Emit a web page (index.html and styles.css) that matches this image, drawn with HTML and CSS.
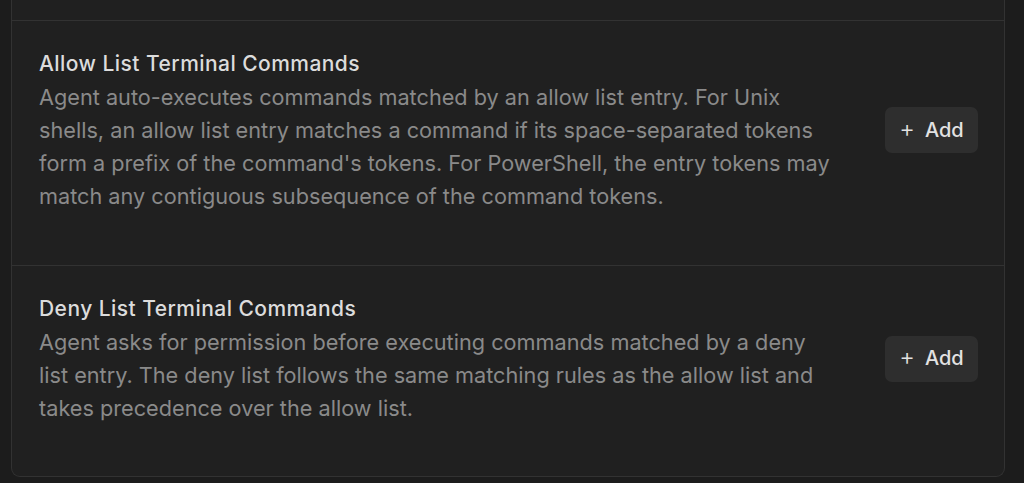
FILE: index.html
```html
<!DOCTYPE html>
<html lang="en">
<head>
<meta charset="utf-8">
<link rel="stylesheet" href="styles.css">
</head>
<body>
<div class="page">
  <div class="card">
    <div class="section section-prev"></div>
    <div class="section">
      <div class="row">
        <div class="text">
          <div class="title">Allow List Terminal Commands</div>
          <div class="desc">Agent auto-executes commands matched by an allow list entry. For Unix<br>shells, an allow list entry matches a command if its space-separated tokens<br>form a prefix of the command's tokens. For PowerShell, the entry tokens may<br>match any contiguous subsequence of the command tokens.</div>
        </div>
        <button class="add-btn"><span class="plus">+</span><span>Add</span></button>
      </div>
    </div>
    <div class="section">
      <div class="row">
        <div class="text">
          <div class="title">Deny List Terminal Commands</div>
          <div class="desc">Agent asks for permission before executing commands matched by a deny<br>list entry. The deny list follows the same matching rules as the allow list and<br>takes precedence over the allow list.</div>
        </div>
        <button class="add-btn"><span class="plus">+</span><span>Add</span></button>
      </div>
    </div>
  </div>
</div>
</body>
</html>
```
FILE: styles.css
```css
* { box-sizing: border-box; }
html, body {
  margin: 0;
  padding: 0;
  background: #1c1c1c;
  font-family: Inter, "Noto Sans", sans-serif;
  overflow: hidden;
}
.page {
  padding: 0 19px 6px 11px;
}
.card {
  background: #202020;
  border: 1px solid #323232;
  border-top: none;
  border-radius: 0 0 9px 9px;
}
.section {
  border-top: 1px solid #323232;
  padding: 26px 26px 52px 27px;
}
.section:last-child {
  padding-bottom: 51px;
}
.section-prev {
  border-top: none;
  height: 20px;
  padding: 0;
}
.row {
  display: flex;
  align-items: center;
  gap: 40px;
}
.text {
  flex: 1;
  min-width: 0;
}
.title {
  font-size: 21px;
  font-weight: 500;
  letter-spacing: 0.45px;
  color: #dcdcdc;
  line-height: 33px;
}
.desc {
  margin-top: 1px;
  font-size: 21.7px;
  color: #8a8a8a;
  line-height: 33px;
  white-space: nowrap;
}
.add-btn {
  flex: none;
  width: 93px;
  height: 46px;
  border: none;
  border-radius: 7px;
  background: #2e2e2e;
  color: #e2e2e2;
  font-family: Inter, "Noto Sans", sans-serif;
  font-size: 20px;
  font-weight: 500;
  display: flex;
  align-items: center;
  justify-content: center;
  gap: 10px;
  padding: 0 0 1px 0;
}
.plus {
  font-weight: 300;
  font-size: 24px;
  line-height: 1;
  margin-top: -2px;
}
```
